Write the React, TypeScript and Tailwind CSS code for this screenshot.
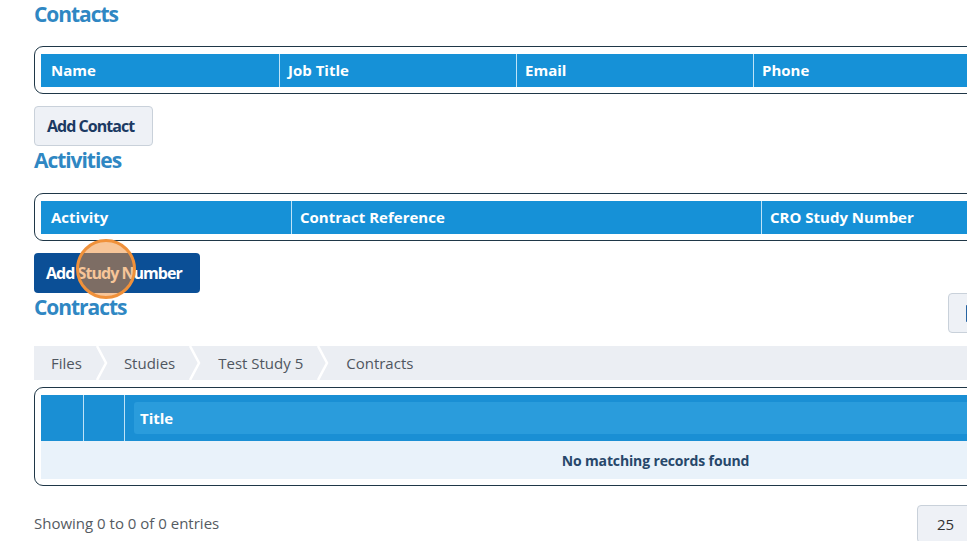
import { FaFileMedical } from 'react-icons/fa';

type Column = { label: string; width?: string };

const contactColumns: Column[] = [
  { label: 'Name', width: 'w-[238px]' },
  { label: 'Job Title', width: 'w-[237px]' },
  { label: 'Email', width: 'w-[237px]' },
  { label: 'Phone' },
];

const activityColumns: Column[] = [
  { label: 'Activity', width: 'w-[250px]' },
  { label: 'Contract Reference', width: 'w-[470px]' },
  { label: 'CRO Study Number' },
];

const crumbs = ['Files', 'Studies', 'Test Study 5', 'Contracts'];

function SectionTitle({ children }: { children: string }) {
  return (
    <h2 className="text-[21px] font-bold leading-[28px] tracking-[-0.05em] text-[#2f87c3]">
      {children}
    </h2>
  );
}

function HeaderTable({ columns }: { columns: Column[] }) {
  return (
    <div className="rounded-[9px] border border-[#1f3747] px-[6px] pb-[6px] pt-[7px]">
      <div className="flex h-[33px] bg-[#1691d7]">
        {columns.map((col, i) => (
          <div
            key={col.label}
            className={`flex items-center text-[15px] font-bold text-white ${
              i > 0 ? 'border-l border-[#bfe3f7] pl-[8px] pr-[10px]' : 'px-[10px]'
            } ${col.width ?? 'flex-1'}`}
          >
            {col.label}
          </div>
        ))}
      </div>
    </div>
  );
}

function Chevron() {
  return (
    <svg width="12" height="34" viewBox="0 0 12 34" className="shrink-0">
      <polyline points="1,0 10,17 1,34" fill="none" stroke="#ffffff" strokeWidth="2.5" />
    </svg>
  );
}

export default function App() {
  return (
    <div className="h-[541px] w-full overflow-hidden bg-white font-['Open_Sans',sans-serif]">
      <div className="ml-[34px] w-[1243px]">
        <SectionTitle>Contacts</SectionTitle>
        <div className="mt-[18px]">
          <HeaderTable columns={contactColumns} />
        </div>
        <button className="mt-[12px] h-[40px] rounded-[4px] border border-[#c9d1da] bg-[#eef1f6] pl-[12px] pr-[18px] text-[16px] font-bold tracking-[-0.06em] text-[#1b3a63]">
          Add Contact
        </button>

        <SectionTitle>Activities</SectionTitle>
        <div className="mt-[19px]">
          <HeaderTable columns={activityColumns} />
        </div>
        <div className="relative mt-[12px] w-fit">
          <button className="h-[40px] rounded-[4px] bg-[#0b4f96] pl-[12px] pr-[18px] text-[16px] font-bold tracking-[-0.06em] text-white">
            Add Study Number
          </button>
          <div className="absolute left-[42px] top-[-14px] h-[60px] w-[60px] rounded-full border-[3px] border-[#f0913a] bg-[#f08c32]/50" />
        </div>

        <div className="flex items-start">
          <div className="w-[914px]">
            <SectionTitle>Contracts</SectionTitle>
          </div>
          <button className="flex h-[40px] items-center gap-2 rounded-[4px] border border-[#c9d1da] bg-[#eef1f6] px-[15px] text-[16px] font-bold tracking-[-0.06em] text-[#1b3a63]">
            <FaFileMedical className="text-[17px] text-[#0b4f96]" />
            Add Contract
          </button>
        </div>

        <nav className="mt-[13px] flex h-[34px] items-center bg-[#ebeef3] text-[15px] text-[#4f5660]">
          {crumbs.map((c, i) => (
            <div key={c} className="flex h-full items-center">
              <span
                className={
                  i === 0 ? 'pl-[17px] pr-[14px]' : i === 1 ? 'pl-[16px] pr-[14px]' : 'pl-[17px] pr-[14px]'
                }
              >
                {c}
              </span>
              {i < crumbs.length - 1 ? <Chevron /> : null}
            </div>
          ))}
        </nav>

        <div className="mt-[7px] rounded-[9px] border border-[#1f3747] px-[6px] pb-[6px] pt-[7px]">
          <div className="flex h-[46px] bg-[#1a8fd4]">
            <div className="w-[42px]" />
            <div className="w-[41px] border-l border-[#bfe3f7]" />
            <div className="flex flex-1 items-center border-l border-[#bfe3f7] px-[9px]">
              <div className="flex h-[32px] flex-1 items-center rounded-[3px] bg-[#2a9cdc] px-[6px] text-[15px] font-bold text-white">
                Title
              </div>
            </div>
          </div>
          <div className="flex h-[38px] items-center justify-center bg-[#e9f2fa] text-[14px] font-bold tracking-[-0.01em] text-[#27476a]">
            No matching records found
          </div>
        </div>

        <div className="mt-[19px] flex items-start">
          <div className="w-[883px] pt-[7px] text-[15px] text-[#555b62]">
            Showing 0 to 0 of 0 entries
          </div>
          <div className="flex h-[38px] items-center gap-3 rounded-[4px] border border-[#c9d1da] bg-[#eef1f6] pl-[19px] pr-[10px] text-[15px] text-[#333]">
            25
            <span className="text-[10px] text-[#888]">▼</span>
          </div>
        </div>
      </div>
    </div>
  );
}
